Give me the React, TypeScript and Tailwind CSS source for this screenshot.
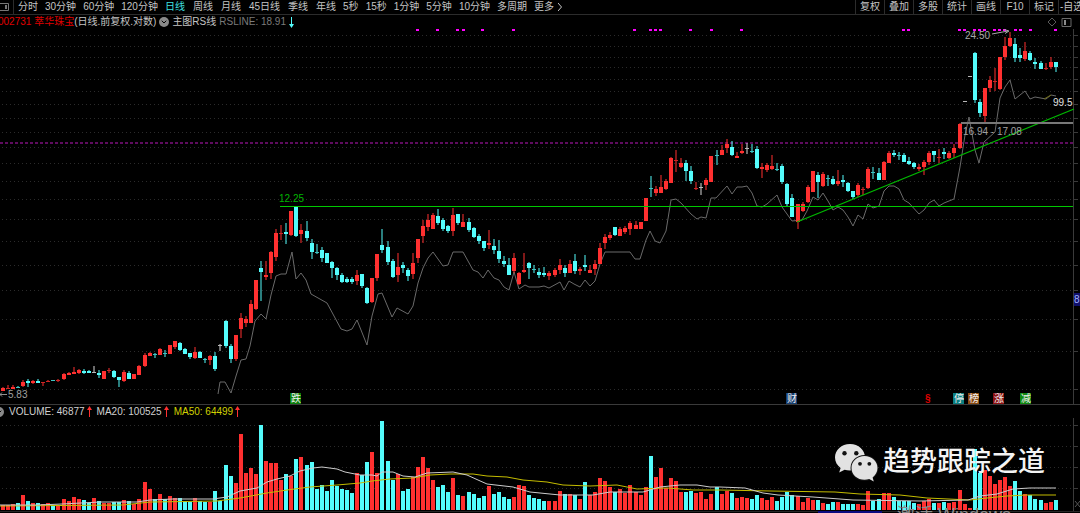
import { ChevronDown } from "lucide-react";

type KIND = "r" | "c" | "w";
// kind, high, body top, body bottom, low (chart units)
type CANDLE = [KIND, number, number, number, number];

const candles: CANDLE[] = [
  ["r", 387, 388, 391, 391], ["r", 385, 388, 389, 389], ["r", 385, 387, 389, 389], ["c", 386, 387, 388, 388],
  ["r", 380, 382, 386, 387], ["c", 379, 381, 383, 387], ["r", 380, 381, 383, 384], ["c", 379, 381, 383, 383],
  ["r", 382, 382, 383, 386], ["r", 380, 381, 382, 382], ["c", 380, 380, 381, 381], ["r", 379, 380, 381, 382],
  ["r", 373, 374, 379, 380], ["r", 372, 373, 375, 375], ["r", 367, 372, 374, 374], ["r", 369, 370, 373, 374],
  ["c", 369, 371, 373, 374], ["c", 370, 371, 373, 373], ["w", 366, 372, 373, 373], ["c", 370, 373, 375, 378],
  ["r", 371, 371, 379, 379], ["r", 368, 370, 371, 373], ["c", 370, 371, 377, 378], ["c", 377, 377, 380, 387],
  ["r", 370, 372, 381, 382], ["c", 371, 373, 379, 379], ["r", 374, 374, 379, 379], ["r", 365, 366, 375, 375],
  ["r", 353, 355, 366, 367], ["r", 352, 353, 356, 356], ["c", 353, 354, 355, 358], ["r", 348, 349, 355, 355],
  ["c", 350, 353, 354, 357], ["r", 345, 345, 354, 354], ["r", 341, 341, 347, 349], ["c", 342, 343, 350, 351],
  ["c", 348, 349, 354, 354], ["c", 353, 353, 357, 359], ["r", 347, 352, 358, 359], ["c", 351, 352, 358, 358],
  ["c", 358, 359, 360, 363], ["r", 355, 356, 360, 365], ["c", 352, 356, 369, 371], ["w", 344, 345, 346, 351],
  ["c", 320, 321, 346, 348], ["c", 344, 346, 359, 363], ["r", 335, 335, 359, 361], ["r", 313, 318, 329, 338],
  ["r", 316, 319, 323, 327], ["r", 300, 304, 323, 323], ["r", 280, 280, 309, 310], ["c", 261, 268, 272, 301],
  ["r", 261, 275, 277, 280], ["r", 251, 252, 273, 279], ["r", 229, 233, 257, 261], ["r", 225, 233, 234, 240],
  ["c", 223, 232, 234, 244], ["r", 211, 211, 235, 236], ["c", 207, 207, 236, 237], ["r", 224, 230, 234, 243],
  ["c", 221, 231, 238, 241], ["c", 239, 243, 252, 259], ["c", 244, 252, 253, 254], ["c", 247, 250, 258, 262],
  ["c", 253, 253, 263, 263], ["c", 261, 262, 268, 278], ["c", 267, 268, 275, 280], ["c", 273, 275, 282, 283],
  ["c", 277, 279, 282, 283], ["c", 277, 279, 282, 284], ["r", 270, 275, 281, 285], ["c", 274, 274, 286, 288],
  ["c", 287, 288, 303, 304], ["r", 278, 278, 302, 303], ["r", 254, 254, 278, 281], ["c", 229, 245, 250, 253],
  ["c", 241, 247, 262, 265], ["c", 259, 261, 277, 278], ["r", 253, 267, 275, 282], ["c", 262, 265, 268, 273],
  ["c", 268, 270, 276, 281], ["r", 253, 263, 274, 279], ["r", 239, 239, 258, 263], ["r", 220, 226, 236, 243],
  ["r", 214, 220, 227, 231], ["r", 213, 215, 229, 229], ["c", 209, 216, 223, 225], ["c", 218, 220, 229, 231],
  ["c", 225, 226, 231, 233], ["r", 208, 215, 231, 236], ["c", 214, 214, 223, 225], ["r", 214, 222, 227, 227],
  ["c", 218, 222, 230, 232], ["c", 227, 228, 237, 238], ["c", 234, 236, 241, 244], ["c", 241, 241, 248, 251],
  ["r", 230, 243, 245, 249], ["c", 239, 246, 250, 254], ["c", 240, 251, 259, 263], ["c", 256, 261, 264, 267],
  ["c", 258, 265, 275, 275], ["r", 253, 258, 271, 273], ["r", 272, 273, 284, 285], ["r", 253, 270, 272, 273],
  ["c", 262, 263, 268, 279], ["c", 265, 269, 270, 273], ["c", 268, 272, 275, 278], ["c", 267, 273, 275, 277],
  ["r", 271, 273, 276, 280], ["r", 268, 270, 275, 277], ["r", 259, 265, 270, 274], ["c", 265, 268, 273, 277],
  ["r", 260, 264, 273, 273], ["c", 254, 261, 271, 274], ["r", 267, 269, 271, 275], ["c", 255, 265, 267, 271],
  ["r", 265, 270, 273, 273], ["r", 260, 264, 269, 275], ["r", 243, 248, 264, 264], ["r", 234, 237, 243, 249],
  ["r", 232, 235, 238, 240], ["c", 227, 227, 235, 236], ["r", 227, 229, 236, 236], ["r", 226, 228, 232, 234],
  ["r", 221, 223, 229, 235], ["r", 221, 225, 229, 229], ["r", 222, 222, 229, 229], ["r", 198, 198, 221, 221],
  ["c", 176, 188, 189, 197], ["r", 186, 189, 193, 196], ["r", 175, 187, 193, 193], ["r", 179, 181, 189, 190],
  ["r", 157, 158, 183, 183], ["r", 150, 160, 161, 172], ["r", 158, 163, 167, 168], ["c", 160, 163, 171, 181],
  ["c", 166, 171, 181, 184], ["r", 182, 188, 189, 190], ["w", 183, 187, 188, 195], ["r", 178, 180, 185, 190],
  ["r", 156, 156, 182, 182], ["c", 150, 155, 156, 165], ["r", 145, 150, 155, 155], ["r", 139, 144, 148, 153],
  ["c", 141, 147, 155, 156], ["r", 152, 156, 158, 158], ["r", 144, 151, 153, 154], ["w", 143, 148, 149, 154],
  ["c", 144, 151, 152, 153], ["c", 146, 149, 168, 169], ["r", 163, 167, 169, 178], ["r", 163, 165, 170, 172],
  ["r", 155, 166, 169, 170], ["c", 163, 169, 170, 171], ["c", 164, 166, 182, 184], ["c", 183, 184, 204, 207],
  ["c", 194, 198, 217, 217], ["r", 204, 204, 222, 229], ["r", 202, 204, 211, 212], ["r", 185, 187, 202, 203],
  ["r", 171, 171, 192, 192], ["c", 172, 175, 182, 198], ["r", 172, 174, 186, 187], ["c", 175, 178, 179, 186],
  ["c", 176, 179, 184, 185], ["r", 170, 181, 184, 186], ["c", 175, 180, 182, 187], ["c", 182, 183, 191, 192],
  ["c", 191, 191, 197, 199], ["r", 183, 185, 195, 197], ["r", 187, 189, 190, 195], ["r", 167, 169, 188, 189],
  ["c", 167, 172, 173, 179], ["c", 168, 173, 180, 180], ["r", 161, 162, 180, 180], ["r", 151, 153, 163, 163],
  ["c", 150, 153, 155, 157], ["c", 152, 155, 156, 160], ["c", 153, 155, 162, 162], ["c", 157, 161, 164, 165],
  ["c", 162, 163, 167, 169], ["r", 164, 167, 169, 171], ["r", 160, 162, 167, 175], ["r", 151, 153, 162, 165],
  ["c", 151, 151, 155, 162], ["r", 149, 157, 158, 163], ["c", 148, 152, 154, 159], ["r", 151, 153, 158, 159],
  ["r", 144, 148, 153, 158], ["r", 123, 124, 148, 149], ["w", 101, 101, 102, 102], ["w", 76, 76, 77, 77],
  ["c", 52, 53, 100, 103], ["c", 99, 102, 113, 117], ["r", 88, 88, 116, 122], ["r", 76, 80, 88, 92],
  ["r", 68, 81, 82, 91], ["r", 57, 57, 89, 90], ["r", 37, 46, 57, 60], ["r", 32, 38, 46, 47],
  ["c", 38, 44, 58, 62], ["c", 48, 55, 58, 62], ["r", 42, 51, 59, 61], ["c", 51, 53, 60, 61],
  ["c", 58, 62, 64, 69], ["c", 61, 63, 69, 69], ["r", 63, 68, 69, 70], ["r", 57, 62, 67, 69],
  ["c", 62, 62, 67, 72],
];

const volumes = [
  5, 5, 6, 7, 15, 9, 7, 7, 6, 7, 5, 5, 11, 9, 13, 11, 10, 7, 12, 9,
  7, 7, 8, 8, 10, 9, 6, 11, 28, 21, 11, 16, 11, 14, 12, 12, 9, 8, 12, 9,
  8, 8, 19, 9, 45, 34, 27, 76, 37, 42, 36, 85, 49, 47, 47, 30, 36, 34, 51, 53,
  45, 48, 21, 25, 19, 30, 24, 21, 20, 17, 37, 35, 48, 58, 37, 89, 49, 30, 36, 19,
  21, 33, 43, 53, 42, 30, 23, 25, 18, 32, 15, 14, 18, 16, 12, 14, 24, 16, 18, 13,
  11, 13, 25, 24, 15, 12, 11, 9, 9, 9, 19, 16, 16, 15, 11, 28, 15, 18, 32, 29,
  23, 18, 21, 17, 25, 18, 15, 23, 54, 33, 42, 22, 32, 29, 18, 18, 19, 17, 18, 11,
  16, 23, 16, 19, 17, 12, 13, 12, 11, 15, 12, 10, 13, 9, 13, 18, 15, 14, 8, 12,
  10, 10, 7, 6, 8, 8, 6, 6, 6, 6, 5, 19, 9, 11, 17, 17, 13, 9, 9, 9,
  7, 6, 9, 11, 7, 7, 8, 7, 8, 20, 6, 2, 61, 37, 40, 34, 26, 30, 33, 24,
  29, 19, 16, 15, 11, 10, 7, 8, 10,
];

const rsLine =
  "218,394 220,382 225,382 231,393 236,376 241,360 246,359 250,346 255,321 261,314 266,319 271,295 276,276 281,274 286,274 292,252 296,279 301,273 306,280 311,294 327,303 341,329 347,331 352,329 357,320 367,345 372,316 378,294 382,293 392,317 397,308 408,314 413,306 418,283 423,268 428,258 433,252 443,266 448,265 453,252 463,252 473,270 478,272 483,278 488,270 494,278 499,280 504,287 509,290 514,272 519,289 525,285 529,287 539,287 544,286 549,288 560,282 564,290 569,281 574,284 580,287 585,280 590,286 595,281 600,264 605,252 630,252 635,259 640,259 646,240 650,231 655,241 660,243 666,231 671,200 676,199 681,203 691,214 697,219 701,217 706,218 711,198 716,198 727,186 732,194 737,187 742,187 747,186 752,193 757,206 762,207 767,204 777,195 782,207 792,221 802,220 807,211 813,197 818,200 823,193 828,201 833,210 838,207 843,210 848,217 853,226 858,215 863,219 868,204 873,208 879,206 884,191 889,186 894,186 899,189 904,200 909,203 919,214 924,210 929,203 934,200 939,206 944,203 954,199 960,167 965,135 969,117 975,150 979,163 984,142 995,132 1000,98 1005,87 1010,80 1015,99 1025,91 1030,99 1035,97 1046,99 1051,95 1056,96";

const ma20 =
  "0,505 37,505 62,504 100,502 137,502 150,500 173,499 213,499 227,497 240,491 257,488 267,482 277,479 290,476 300,471 313,468 322,467 337,469 345,472 360,475 372,475 377,476 382,472 393,472 403,476 415,477 427,473 453,472 467,475 478,480 487,484 513,487 530,492 560,495 593,495 610,492 643,492 660,487 680,485 697,485 710,487 720,487 745,488 763,493 778,495 813,497 853,500 920,501 968,500 980,496 997,494 1013,489 1030,488 1056,488";

const ma50 =
  "0,506 123,505 150,502 217,501 240,498 267,493 287,490 310,487 337,485 360,483 372,481 390,479 413,478 430,475 450,474 473,474 487,476 507,477 523,480 547,482 563,485 590,486 617,485 637,489 667,488 693,490 720,490 770,491 835,492 860,494 900,495 927,498 970,500 987,498 1007,496 1027,495 1056,495";

const priceGrid = [35, 46, 57, 67, 79, 91, 104, 118, 132, 147, 163, 181, 199, 219, 241, 265, 290, 319, 351, 389];
const volumeGrid = [425, 446, 467, 488];

const signals = [
  417, 437, 457, 463, 482, 513, 634, 650, 655, 660, 690, 711, 741, 903, 908, 959, 964, 974, 979, 984, 994, 999, 1004,
  1015, 1020, 1030, 1055,
];

const badges = [
  { x: 290, text: "跌", fill: "#0a7d0a" },
  { x: 786, text: "财", fill: "#173f70" },
  { x: 953, text: "停", fill: "#0b7f80" },
  { x: 968, text: "榜", fill: "#8a4a10" },
  { x: 993, text: "涨", fill: "#8c1010" },
  { x: 1020, text: "减", fill: "#0f870f" },
];

const minutePeriods = ["分时", "30分钟", "60分钟", "120分钟"];
const dayPeriods = ["日线", "周线", "月线", "45日线", "季线", "年线"];
const shortPeriods = ["5秒", "15秒", "1分钟", "5分钟", "10分钟", "多周期", "更多"];
const tools = ["复权", "叠加", "多股", "统计", "画线", "F10", "标记"];

const FILL = { r: "#ff3030", c: "#54fcfc", w: "#d8d8d8" };
const WICK = { r: "#d02424", c: "#3cc4c4", w: "#b8b8b8" };

const candleX = (i: number) => Math.round(2.8 + i * 5.062);

const UpArrow = () => (
  <svg className="h-3 w-[5px]" viewBox="0 0 5 12" fill="#ff3030">
    <path d="M2 1h1v10H2z" />
    <path d="M2.5 0 5 4H0z" />
  </svg>
);

const Circle = () => (
  <span className="flex size-[10px] shrink-0 items-center justify-center rounded-full bg-[#8a8a8a] text-black">
    <ChevronDown size={8} strokeWidth={3} />
  </span>
);

const Toolbar = () => (
  <header className="flex h-[15px] items-center overflow-hidden border-b border-[#2c2c2c] whitespace-nowrap text-[#c4c4c4]">
    <button aria-label="侧栏" className="flex h-full w-[14px] shrink-0 items-center border-r border-[#2c2c2c]">
      <svg className="h-[10px] w-[10px]" viewBox="0 0 10 10" fill="none" stroke="#777">
        <path d="M0 1.500h8.500v7H0" />
        <path d="M5 3h2v4H5z" fill="#777" stroke="none" />
      </svg>
    </button>
    <nav className="flex gap-[7px] pl-1">
      <div className="flex gap-[7px]">
        {minutePeriods.map((p) => (
          <button key={p}>{p}</button>
        ))}
      </div>
      <div className="flex gap-2">
        {dayPeriods.map((p) => (
          <button key={p} className={p === "日线" ? "text-[#3fe0e0]" : ""}>
            {p}
          </button>
        ))}
      </div>
      <div className="flex items-center gap-[7px]">
        {shortPeriods.map((p) => (
          <button key={p} className="flex items-center gap-1">
            {p}
            {p === "更多" && (
              <svg className="h-2 w-1" viewBox="0 0 4 8" fill="none" stroke="currentColor">
                <path d="M0 0l3.500 4L0 8" />
              </svg>
            )}
          </button>
        ))}
      </div>
    </nav>
    <div className="ml-auto flex h-full">
      {tools.map((t) => (
        <button key={t} className="w-[29px] border-l border-[#2c2c2c]">
          {t}
        </button>
      ))}
      <button className="w-[22px] overflow-hidden border-l border-[#2c2c2c] pl-px text-left">-自选</button>
    </div>
  </header>
);

const PriceChart = () => (
  <svg className="block w-full" viewBox="0 29 1080 375" fontSize="10">
    <g stroke="#2b2b2b" strokeDasharray="1 3">
      {priceGrid.map((y) => (
        <path key={y} d={`M2 ${y + 0.5}H1073`} />
      ))}
    </g>
    <path d={`M1073.5 29V404${priceGrid.map((y) => `M1074 ${y + 0.5}h4`).join("")}`} stroke="#3a3a3a" />

    {signals.map((x) => (
      <rect key={x} x={x - 1} y="29" width="3" height="2" fill="#ff00ff" />
    ))}

    <path d="M0 143H1073" stroke="#7d107d" strokeWidth="1.5" strokeDasharray="3 2" />
    <polyline points={rsLine} fill="none" stroke="#6a6a6a" />
    <path d="M1044 99 1051 95" stroke="#6d6a12" />

    {candles.map(([kind, high, top, bottom, low], i) => {
      const x = candleX(i);
      return (
        <g key={i}>
          <rect x={x - 0.5} y={high} width="1" height={low - high} fill={FILL[kind]} />
          <rect x={x - 2} y={top} width="4" height={bottom - top} fill={FILL[kind]} />
          {bottom - top === 1 && <rect x={x - 2} y={top} width="4" height="1" fill={WICK[kind]} />}
        </g>
      );
    })}

    <path d="M280 206.500H1073" stroke="#00c800" />
    <path d="M797 222 1074 109" stroke="#00b800" strokeWidth="1.3" />
    <path d="M961 123H1073" stroke="#787878" strokeWidth="2" />

    <text x="279" y="202" fill="#00b400">12.25</text>
    <text x="965" y="39" fill="#a8a8a8">24.50</text>
    <path d="M992 34 1008 31M1004 29.500 1009 31 1005 33.500" fill="none" stroke="#a8a8a8" />
    <text x="963" y="135" fill="#a0a0a0">16.94 - 17.08</text>
    <text x="1053" y="106" fill="#e0e0e0">99.5</text>
    <path d="M0 394.500H7M2 392.500 0 394.500 2 396.500" fill="none" stroke="#909090" />
    <text x="8" y="398" fill="#a0a0a0">5.83</text>

    <rect x="1074" y="293" width="6" height="13" fill="#10106c" />
    <text x="1074" y="303" fill="#a0b4ff">8</text>

    {badges.map((b) => (
      <g key={b.text}>
        <rect x={b.x} y="393" width="11" height="11" fill={b.fill} />
        <text x={b.x + 1} y="402" fill="#f0f0f0">{b.text}</text>
      </g>
    ))}
    <text x="925" y="402" fill="#e00000" fontWeight="bold">§</text>
  </svg>
);

const VolumeChart = () => (
  <svg className="block w-full" viewBox="0 418 1080 95">
    <g stroke="#2b2b2b" strokeDasharray="1 3">
      {volumeGrid.map((y) => (
        <path key={y} d={`M2 ${y + 0.5}H1073`} />
      ))}
    </g>
    <path d={`M1073.5 418V511${volumeGrid.map((y) => `M1074 ${y + 0.5}h4`).join("")}`} stroke="#3a3a3a" />
    {volumes.map((v, i) => {
      const kind = candles[i][0] === "c" || i === 43 ? "c" : "r";
      return <rect key={i} x={candleX(i) - 2} y={510 - v} width="4" height={v} fill={FILL[kind]} />;
    })}
    <polyline points={ma50} fill="none" stroke="#c4bc00" />
    <polyline points={ma20} fill="none" stroke="#cccccc" />
    <path d="M0 511.500H1080" stroke="#262626" />
    <rect x="818" y="511" width="64" height="2" fill="#0a0a80" />
    <path d="M1075 501 1080 507M1080 501 1075 507" stroke="#555" />
  </svg>
);

const WeChat = () => (
  <svg className="h-[39px] w-[44px]" viewBox="0 0 44 39">
    <path
      fill="#e2e2e2"
      d="M16 1C7.500 1 1 7 1 14.500c0 4.300 2.200 8 5.600 10.400L5.200 29.500l5.400-2.700c1.700.5 3.500.8 5.400.8C24.500 27.600 31 21.700 31 14.500S24.500 1 16 1z"
    />
    <ellipse cx="30.500" cy="25" rx="14" ry="13" fill="#111" />
    <path
      fill="#e2e2e2"
      d="M30.500 13C23.300 13 17.500 18.300 17.500 25s5.800 11.800 13 11.800c1.700 0 3.200-.3 4.700-.8l4.600 2.500-1.200-4.100c3-2.200 4.900-5.600 4.900-9.400C43.500 18.300 37.700 13 30.500 13z"
    />
    <g fill="#111">
      <circle cx="10.500" cy="10.300" r="2.200" />
      <circle cx="22.300" cy="10.300" r="2.200" />
      <circle cx="26" cy="20.800" r="1.900" />
      <circle cx="35.300" cy="20.800" r="1.900" />
    </g>
  </svg>
);

const App = () => {
  return (
    <div className="relative w-full overflow-hidden bg-black font-['Liberation_Sans','Noto_Sans_CJK_SC',sans-serif] text-[10px] leading-[14px]">
      <Toolbar />

      <div className="flex h-[14px] items-center gap-[3px] whitespace-nowrap text-[#c4c4c4]">
        <div className="-ml-0.5">
          <span className="text-[#e00000]">002731 萃华珠宝</span>
          <span>(日线.前复权.对数)</span>
        </div>
        <Circle />
        <span>主图RS线</span>
        <span className="text-[#7a7a7a]">RSLINE: 18.91</span>
        <svg className="h-3 w-[5px]" viewBox="0 0 5 12" fill="#54fcfc">
          <path d="M2 1h1v10H2z" />
          <path d="M2.500 12 0 8h5z" />
        </svg>
        <div className="ml-auto flex items-center gap-1 pr-2">
          <svg className="size-[10px]" viewBox="0 0 10 10" fill="none" stroke="#5a5a5a">
            <path d="M5 1 9 5 5 9 1 5z" />
          </svg>
          <svg className="size-[11px]" viewBox="0 0 11 11" fill="none" stroke="#6a6a6a">
            <path d="M1 1.500h9v8H1z" />
            <path d="M3 3h2v5H3z" fill="#8a8a8a" stroke="none" />
          </svg>
        </div>
      </div>

      <PriceChart />

      <section className="border-t border-[#3a3a3a]">
        <div className="flex h-[13px] items-center gap-[5px] overflow-hidden whitespace-nowrap text-[#d0d0d0]">
          <div className="-ml-1.5">
            <Circle />
          </div>
          <span className="flex items-center gap-0.5">
            VOLUME: 46877 <UpArrow />
          </span>
          <span className="flex items-center gap-0.5">
            MA20: 100525 <UpArrow />
          </span>
          <span className="flex items-center gap-0.5 text-[#d0d000]">
            MA50: 64499 <UpArrow />
          </span>
        </div>
        <VolumeChart />
      </section>

      <div className="absolute right-[35px] bottom-[31px] flex items-center gap-[5px]">
        <WeChat />
        <span className="text-[27px] leading-[35px] font-medium text-[#f4f4f4]">趋势跟踪之道</span>
      </div>
      <div className="absolute right-[69px] bottom-0 h-[8px] overflow-hidden text-[18px] leading-[20px] whitespace-nowrap text-[#8c8c8c]">
        激活 Windows
      </div>
    </div>
  );
};

export default App;
